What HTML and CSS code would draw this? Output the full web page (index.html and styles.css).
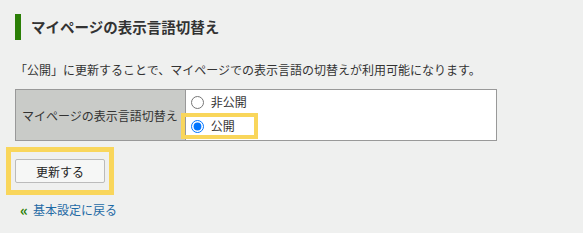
FILE: index.html
```html
<!DOCTYPE html>
<html lang="ja">
<head>
  <meta charset="UTF-8">
  <title>マイページの表示言語切替え</title>
  <link rel="stylesheet" href="styles.css">
</head>
<body>
  <h2 class="section-title">マイページの表示言語切替え</h2>

  <p class="desc">「公開」に更新することで、マイページでの表示言語の切替えが利用可能になります。</p>

  <table class="setting-table">
    <tr>
      <th>マイページの表示言語切替え</th>
      <td>
        <label class="radio"><input type="radio" name="lang"> 非公開</label>
        <label class="radio mark"><input type="radio" name="lang" checked> 公開</label>
      </td>
    </tr>
  </table>

  <div class="actions">
    <span class="btn-mark"><button type="button" class="btn">更新する</button></span>
  </div>

  <p class="back"><a href="#"><span class="arrow">«</span>基本設定に戻る</a></p>
</body>
</html>
```

FILE: styles.css
```css
body {
  margin: 0;
  padding: 0 15px;
  background-color: #eff0ef;
  font-family: "Noto Sans CJK JP", "Noto Sans", sans-serif;
  font-size: 12px;
  color: #333;
}

.section-title {
  margin: 14px 0 0;
  padding-left: 10px;
  border-left: 6px solid #2b7f06;
  height: 26px;
  line-height: 26px;
  font-size: 14.5px;
  font-weight: bold;
  color: #333;
}

.desc {
  margin: 21px 0 0;
  line-height: 18px;
}

.setting-table {
  margin-top: 10px;
  width: 482px;
  border-collapse: collapse;
  border: 1px solid #999;
}

.setting-table th {
  width: 157px;
  padding: 0 6px;
  background-color: #c9cbc8;
  font-weight: normal;
  text-align: left;
  border: 1px solid #999;
}

.setting-table td {
  padding: 3px 0 5px;
  background-color: #fff;
  border: 1px solid #999;
}

.radio {
  display: block;
  width: 69px;
  height: 18px;
  line-height: 18px;
  margin-left: -1px;
}

.radio + .radio {
  margin-top: 6px;
}

.radio input {
  margin: 0 4px 0 6px;
  vertical-align: -2px;
}

.mark {
  background-color: #fff;
  outline: 4px solid #f9d65b;
}

.actions {
  margin-top: 6px;
}

.btn-mark {
  display: inline-block;
  margin-left: -9px;
  padding: 7px 4px;
  border: 5px solid #f9d65b;
}

.btn {
  display: block;
  width: 90px;
  height: 24px;
  padding: 0;
  border: 1px solid #bbb;
  border-radius: 2px;
  background-color: #f6f7f6;
  font-family: inherit;
  font-size: 12px;
  color: #222;
}

.back {
  margin: 6px 0 0 5px;
  line-height: 18px;
}

.back a {
  color: #1f6aa5;
  text-decoration: none;
}

.arrow {
  display: inline-block;
  width: 13px;
  color: #2b7f06;
  font-size: 15px;
  font-weight: bold;
  vertical-align: -1px;
}
```
